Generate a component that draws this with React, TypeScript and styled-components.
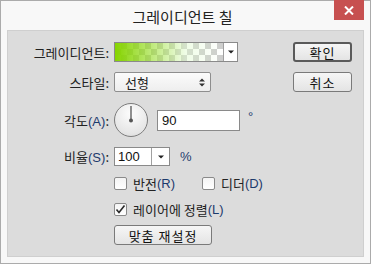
import styled, { createGlobalStyle } from 'styled-components'

const GlobalStyle = createGlobalStyle`
  html, body {
    margin: 0;
    padding: 0;
    background: #ffffff;
  }
  body {
    font-family: "Noto Sans CJK KR", "Noto Sans", sans-serif;
    color: #222;
  }
`

const Window = styled.div`
  width: 371px;
  height: 264px;
  box-sizing: border-box;
  border: 1px solid #ababab;
  background: #f8f8f8;
  display: flex;
  flex-direction: column;
`

const TitleBar = styled.div`
  height: 29px;
  display: grid;
  grid-template-columns: 1fr auto 1fr;
  padding-right: 6px;
`

const Title = styled.div`
  grid-column: 2;
  align-self: center;
  font-size: 15px;
  line-height: 1;
  color: #222;
  padding-top: 1px;
`

const CloseButton = styled.div`
  grid-column: 3;
  justify-self: end;
  width: 30px;
  height: 20px;
  margin-top: -1px;
  background: #c75050;
  display: flex;
  align-items: center;
  justify-content: center;
`

const Panel = styled.div`
  flex: 1;
  margin: 0 6px 6px 6px;
  border: 1px solid #cfcfcf;
  background: #dcdcdc;
  display: flex;
`

const Form = styled.div`
  flex: 1;
  display: flex;
  flex-direction: column;
`

const Row = styled.div<{ $top: number; $h: number }>`
  display: flex;
  align-items: center;
  margin-top: ${({ $top }) => $top}px;
  height: ${({ $h }) => $h}px;
`

const Label = styled.div`
  width: 101px;
  margin-right: 5px;
  text-align: right;
  font-size: 13px;
  white-space: nowrap;
`

const Indent = styled.div`
  width: 106px;
  flex: none;
`

const Key = styled.span`
  font-family: "Liberation Sans", Arial, sans-serif;
  color: #1c3a6c;
  font-size: 13px;
`

const GradientPicker = styled.div`
  display: flex;
  width: 124px;
  height: 20px;
  box-sizing: border-box;
  border: 1px solid #8a8a8a;
  background: #fff;
`

const GradientSwatch = styled.div`
  flex: 1;
  background:
    linear-gradient(to right, #86d400 0%, rgba(150, 220, 40, 0.6) 35%, rgba(220, 250, 200, 0.45) 65%, rgba(255, 255, 255, 0) 100%),
    conic-gradient(#cdcdcd 25%, #ffffff 0 50%, #cdcdcd 0 75%, #ffffff 0) 0 0 / 12px 12px;
`

const DropPart = styled.div<{ $w: number }>`
  width: ${({ $w }) => $w}px;
  border-left: 1px solid #a0a0a0;
  background: #fff;
  display: flex;
  align-items: center;
  justify-content: center;
`

const Select = styled.div`
  width: 97px;
  height: 20px;
  box-sizing: border-box;
  border: 1px solid #8e8e8e;
  border-radius: 2px;
  background: linear-gradient(#fbfbfb, #eeeeee);
  display: flex;
  align-items: center;
  justify-content: space-between;
  padding: 0 5px 0 10px;
  font-size: 13px;
`

const Dial = styled.div`
  width: 34px;
  height: 34px;
  box-sizing: border-box;
  border-radius: 50%;
  border: 1px solid #7c7c7c;
  background: radial-gradient(circle at 50% 30%, #fdfdfd 0%, #e6e6e6 70%, #d6d6d6 100%);
  display: flex;
  justify-content: center;
`

const DialNeedle = styled.svg`
  width: 32px;
  height: 32px;
`

const TextInput = styled.div<{ $w: number }>`
  width: ${({ $w }) => $w}px;
  height: 21px;
  box-sizing: border-box;
  border: 1px solid #8a8a8a;
  background: #fff;
  display: flex;
  align-items: center;
  padding-left: 4px;
  font-family: "Liberation Sans", Arial, sans-serif;
  font-size: 13px;
  color: #111;
`

const Combo = styled.div`
  display: flex;
  width: 56px;
  height: 19px;
  box-sizing: border-box;
  border: 1px solid #8a8a8a;
  background: #fff;
`

const ComboText = styled.div`
  flex: 1;
  display: flex;
  align-items: center;
  padding-left: 3px;
  font-family: "Liberation Sans", Arial, sans-serif;
  font-size: 13px;
  color: #111;
`

const Unit = styled.span<{ $left: number; $raise?: number }>`
  margin-left: ${({ $left }) => $left}px;
  font-family: "Liberation Sans", Arial, sans-serif;
  font-size: 13px;
  color: #1c3a6c;
  position: relative;
  top: ${({ $raise }) => -($raise ?? 0)}px;
`

const Check = styled.label<{ $gap?: number }>`
  display: flex;
  align-items: center;
  font-size: 13px;
  margin-right: ${({ $gap }) => $gap ?? 0}px;
  white-space: nowrap;
`

const Box = styled.span`
  width: 13px;
  height: 13px;
  box-sizing: border-box;
  border: 1px solid #8a8a8a;
  border-radius: 2px;
  background: linear-gradient(#f4f4f4, #ffffff);
  margin-right: 6px;
  display: flex;
  align-items: center;
  justify-content: center;
`

const Button = styled.div<{ $w: number; $default?: boolean }>`
  width: ${({ $w }) => $w}px;
  height: 20px;
  box-sizing: border-box;
  border: ${({ $default }) => ($default ? '2px solid #5a5a5a' : '1px solid #7a7a7a')};
  border-radius: 3px;
  background: linear-gradient(#f6f6f6, #e4e4e4);
  display: flex;
  align-items: center;
  justify-content: center;
  font-size: 13px;
  letter-spacing: 1px;
  color: #111;
`

const Actions = styled.div`
  display: flex;
  flex-direction: column;
  gap: 10px;
  padding: 11px 11px 0 0;
`

const DownArrow = () => (
  <svg width="6" height="4" viewBox="0 0 6 4">
    <path d="M0 0.5h6L3 3.5z" fill="#222" />
  </svg>
)

const UpDownArrow = () => (
  <svg width="6" height="9" viewBox="0 0 6 9">
    <path d="M0 3.5h6L3 0.5z M0 5.5h6L3 8.5z" fill="#333" />
  </svg>
)

const CheckMark = () => (
  <svg width="11" height="11" viewBox="0 0 11 11">
    <path d="M1.5 5.5l2.5 3 5.5-7" fill="none" stroke="#2a2a2a" strokeWidth="1.6" />
  </svg>
)

const App = () => (
  <>
    <GlobalStyle />
    <Window>
      <TitleBar>
        <Title>그레이디언트 칠</Title>
        <CloseButton>
          <svg width="10" height="9" viewBox="0 0 10 9">
            <path d="M1 0.5l8 8M9 0.5l-8 8" stroke="#fff" strokeWidth="2" />
          </svg>
        </CloseButton>
      </TitleBar>
      <Panel>
        <Form>
          <Row $top={11} $h={20}>
            <Label>그레이디언트:</Label>
            <GradientPicker>
              <GradientSwatch />
              <DropPart $w={13}>
                <DownArrow />
              </DropPart>
            </GradientPicker>
          </Row>
          <Row $top={10} $h={20}>
            <Label>스타일:</Label>
            <Select>
              <span>선형</span>
              <UpDownArrow />
            </Select>
          </Row>
          <Row $top={11} $h={34}>
            <Label>
              각도<Key>(A)</Key>:
            </Label>
            <Dial>
              <DialNeedle viewBox="0 0 32 32">
                <line x1="16" y1="2" x2="16" y2="16" stroke="#555" strokeWidth="1.3" />
                <circle cx="16" cy="16.5" r="2" fill="#555" />
              </DialNeedle>
            </Dial>
            <TextInput $w={83} style={{ marginLeft: 9 }}>
              90
            </TextInput>
            <Unit $left={8} $raise={4}>°</Unit>
          </Row>
          <Row $top={10} $h={19}>
            <Label>
              비율<Key>(S)</Key>:
            </Label>
            <Combo>
              <ComboText>100</ComboText>
              <DropPart $w={17}>
                <DownArrow />
              </DropPart>
            </Combo>
            <Unit $left={10}>%</Unit>
          </Row>
          <Row $top={11} $h={13}>
            <Indent />
            <Check $gap={27}>
              <Box />
              반전<Key>(R)</Key>
            </Check>
            <Check>
              <Box />
              디더<Key>(D)</Key>
            </Check>
          </Row>
          <Row $top={13} $h={13}>
            <Indent />
            <Check>
              <Box>
                <CheckMark />
              </Box>
              레이어에 정렬<Key>(L)</Key>
            </Check>
          </Row>
          <Row $top={9} $h={20}>
            <Indent />
            <Button $w={98}>맞춤 재설정</Button>
          </Row>
        </Form>
        <Actions>
          <Button $w={59} $default>
            확인
          </Button>
          <Button $w={59}>취소</Button>
        </Actions>
      </Panel>
    </Window>
  </>
)

export default App
